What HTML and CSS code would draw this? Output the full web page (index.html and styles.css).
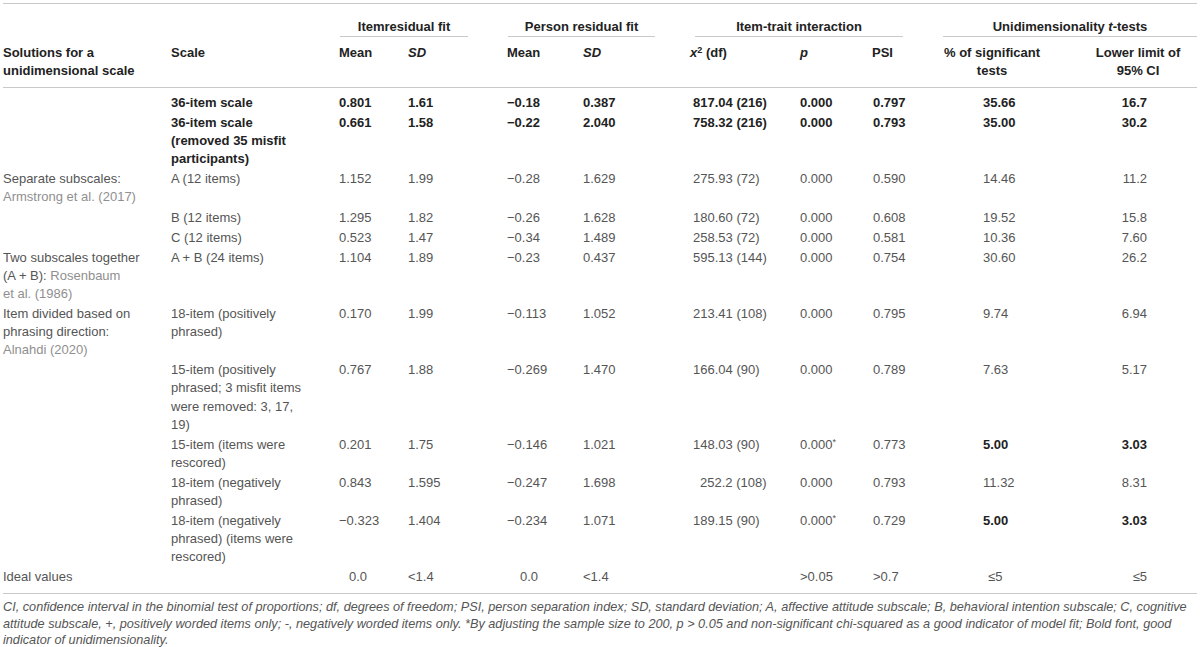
FILE: index.html
```html
<!DOCTYPE html>
<html>
<head>
<meta charset="utf-8">
<title>Table</title>
<link rel="stylesheet" href="styles.css">
</head>
<body>
<div class="page">
<table class="tbl">
<colgroup>
<col class="w1"><col class="w2"><col class="w3"><col class="w4"><col class="w5"><col class="w6"><col class="w7"><col class="w8"><col class="w9"><col class="w10"><col class="w11">
</colgroup>
<thead>
<tr class="grp">
<th></th><th></th>
<th colspan="2" class="g g-item"><div class="gl">Itemresidual fit</div></th>
<th colspan="2" class="g g-person"><div class="gl">Person residual fit</div></th>
<th colspan="3" class="g g-trait"><div class="gl">Item-trait interaction</div></th>
<th colspan="2" class="g g-uni"><div class="gl">Unidimensionality <i>t</i>-tests</div></th>
</tr>
<tr class="cols">
<th>Solutions for a unidimensional scale</th>
<th>Scale</th>
<th>Mean</th>
<th><i>SD</i></th>
<th>Mean</th>
<th><i>SD</i></th>
<th><i>x</i><sup>2</sup> (df)</th>
<th><i>p</i></th>
<th>PSI</th>
<th>% of significant tests</th>
<th>Lower limit of 95% CI</th>
</tr>
</thead>
<tbody>
<tr class="first strong">
<td></td><td>36-item scale</td><td>0.801</td><td>1.61</td><td>−0.18</td><td>0.387</td><td>817.04 (216)</td><td>0.000</td><td>0.797</td><td>35.66</td><td>16.7</td>
</tr>
<tr class="strong">
<td></td><td>36-item scale (removed 35 misfit participants)</td><td>0.661</td><td>1.58</td><td>−0.22</td><td>2.040</td><td>758.32 (216)</td><td>0.000</td><td>0.793</td><td>35.00</td><td>30.2</td>
</tr>
<tr>
<td>Separate subscales: <span class="cite">Armstrong et&nbsp;al. (2017)</span></td><td>A (12 items)</td><td>1.152</td><td>1.99</td><td>−0.28</td><td>1.629</td><td>275.93 (72)</td><td>0.000</td><td>0.590</td><td>14.46</td><td>11.2</td>
</tr>
<tr>
<td></td><td>B (12 items)</td><td>1.295</td><td>1.82</td><td>−0.26</td><td>1.628</td><td>180.60 (72)</td><td>0.000</td><td>0.608</td><td>19.52</td><td>15.8</td>
</tr>
<tr>
<td></td><td>C (12 items)</td><td>0.523</td><td>1.47</td><td>−0.34</td><td>1.489</td><td>258.53 (72)</td><td>0.000</td><td>0.581</td><td>10.36</td><td>7.60</td>
</tr>
<tr>
<td>Two subscales together (A + B): <span class="cite">Rosenbaum et&nbsp;al. (1986)</span></td><td>A + B (24 items)</td><td>1.104</td><td>1.89</td><td>−0.23</td><td>0.437</td><td>595.13 (144)</td><td>0.000</td><td>0.754</td><td>30.60</td><td>26.2</td>
</tr>
<tr>
<td>Item divided based on phrasing direction: <span class="cite">Alnahdi (2020)</span></td><td>18-item (positively phrased)</td><td>0.170</td><td>1.99</td><td>−0.113</td><td>1.052</td><td>213.41 (108)</td><td>0.000</td><td>0.795</td><td>9.74</td><td>6.94</td>
</tr>
<tr>
<td></td><td>15-item (positively phrased; 3 misfit items were removed: 3, 17, 19)</td><td>0.767</td><td>1.88</td><td>−0.269</td><td>1.470</td><td>166.04 (90)</td><td>0.000</td><td>0.789</td><td>7.63</td><td>5.17</td>
</tr>
<tr>
<td></td><td>15-item (items were rescored)</td><td>0.201</td><td>1.75</td><td>−0.146</td><td>1.021</td><td>148.03 (90)</td><td>0.000<sup>*</sup></td><td>0.773</td><td><b>5.00</b></td><td><b>3.03</b></td>
</tr>
<tr>
<td></td><td>18-item (negatively phrased)</td><td>0.843</td><td>1.595</td><td>−0.247</td><td>1.698</td><td><span class="shift">252.2 (108)</span></td><td>0.000</td><td>0.793</td><td>11.32</td><td>8.31</td>
</tr>
<tr>
<td></td><td>18-item (negatively phrased) (items were rescored)</td><td>−0.323</td><td>1.404</td><td>−0.234</td><td>1.071</td><td>189.15 (90)</td><td>0.000<sup>*</sup></td><td>0.729</td><td><b>5.00</b></td><td><b>3.03</b></td>
</tr>
<tr class="ideal">
<td>Ideal values</td><td></td><td><span class="nudge-l">0.0</span></td><td>&lt;1.4</td><td><span class="shift-m">0.0</span></td><td>&lt;1.4</td><td></td><td>&gt;0.05</td><td>&gt;0.7</td><td><span class="shift-s">≤5</span></td><td>≤5</td>
</tr>
</tbody>
</table>
<p class="note">CI, confidence interval in the binomial test of proportions; df, degrees of freedom; PSI, person separation index; SD, standard deviation; A, affective attitude subscale; B, behavioral intention subscale; C, cognitive attitude subscale, +, positively worded items only; -, negatively worded items only. *By adjusting the sample size to 200, p &gt; 0.05 and non-significant chi-squared as a good indicator of model fit; Bold font, good indicator of unidimensionality.</p>
</div>
</body>
</html>
```
FILE: styles.css
```css
html, body {
  margin: 0;
  background: #ffffff;
}
body {
  font-family: "Liberation Sans", Arial, Helvetica, sans-serif;
  font-size: 13px;
  color: #555555;
}
.page {
  padding: 0 3px;
}
.tbl {
  width: 1194px;
  border-collapse: collapse;
  table-layout: fixed;
  border-top: 1px solid #c9c9c9;
  margin-top: 3px;
}
.w1 { width: 168px; }
.w2 { width: 168px; }
.w3 { width: 69px; }
.w4 { width: 99px; }
.w5 { width: 76px; }
.w6 { width: 107px; }
.w7 { width: 110px; }
.w8 { width: 72px; }
.w9 { width: 71px; }
.w10 { width: 136px; }
.w11 { width: 118px; }

.tbl th, .tbl td {
  padding: 1px 0;
  line-height: 18px;
  vertical-align: top;
  text-align: left;
  font-weight: normal;
}
.tbl td {
  line-height: 18.1px;
}
.tbl th {
  font-weight: bold;
  color: #222222;
}
.tbl sup {
  font-size: 9px;
  line-height: 0;
  vertical-align: 4px;
}

/* group header row */
.grp th {
  padding-top: 14px;
  padding-bottom: 0;
}
.gl {
  text-align: center;
  border-bottom: 1px solid #c9c9c9;
  padding-bottom: 0;
}
.g-item { padding-left: 1px !important; padding-right: 39px !important; }
.g-person { padding-left: 1px !important; padding-right: 35px !important; }
.g-trait { padding-left: 5px !important; padding-right: 40px !important; }
.g-uni { padding-left: 0; padding-right: 0; }

/* column header row */
.cols {
  border-bottom: 1px solid #c9c9c9;
}
.cols th {
  padding-top: 7px;
  padding-bottom: 7px;
}
.cols th:nth-child(1) { padding-right: 26px; }
.cols th:nth-child(10) { text-align: center; padding-right: 38px; }
.cols th:nth-child(11) { text-align: center; padding-left: 9px; padding-right: 9px; }

/* body columns */
.tbl td:nth-child(1) { padding-right: 26px; }
.tbl td:nth-child(2) { padding-right: 34px; }
.tbl td:nth-child(3) { text-align: right; padding-right: 38px; }
.tbl td:nth-child(7) { padding-left: 3px; }
.tbl td:nth-child(9) { padding-left: 1px; }
.tbl td:nth-child(10) { padding-left: 40px; }
.tbl td:nth-child(11) { text-align: right; padding-right: 50px; }

.tbl tr.first td { padding-top: 6px; }
.strong td {
  font-weight: bold;
  color: #222222;
}
.tbl td b {
  color: #222222;
}
.cite {
  color: #8f8f8f;
}
.shift { padding-left: 7px; }
.shift-m { padding-left: 13px; }
.shift-s { padding-left: 5px; }
.nudge-l { padding-right: 3px; }

.ideal {
  border-bottom: 1px solid #c9c9c9;
}
.ideal td {
  padding-bottom: 7px;
}

.note {
  margin: 5px 0 0;
  font-style: italic;
  font-size: 12.7px;
  line-height: 16.5px;
  color: #555555;
}
```
